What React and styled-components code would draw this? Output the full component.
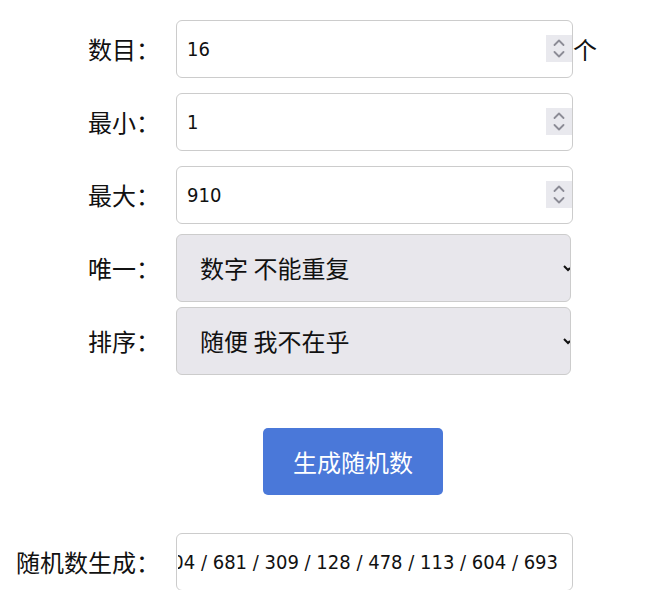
import React, { useEffect, useRef } from "react";
import styled, { createGlobalStyle } from "styled-components";

const GlobalStyle = createGlobalStyle`
  html, body {
    margin: 0;
    padding: 0;
    background: #ffffff;
  }
  body {
    font-family: "Noto Sans CJK SC", "Noto Sans", sans-serif;
    color: #111111;
  }
`;

const Form = styled.div`
  padding-top: 12px;
  display: flex;
  flex-direction: column;
`;

const Row = styled.div`
  display: grid;
  grid-template-columns: 160px 397px auto;
  column-gap: 16px;
  align-items: center;
  height: ${(p) => p.height || 73}px;
`;

const Label = styled.label`
  justify-self: end;
  font-size: 24px;
  line-height: 1;
  white-space: nowrap;
`;

const FieldWrap = styled.div`
  position: relative;
  width: 397px;
  height: 58px;
`;

const Field = styled.input`
  box-sizing: border-box;
  width: 397px;
  height: 58px;
  padding: 0 ${(p) => (p.type === "number" ? 30 : 14)}px 0
    ${(p) => (p.type === "number" ? 10 : 1)}px;
  border: 1px solid #cccccc;
  border-radius: 6px;
  background: #ffffff;
  font-family: "DejaVu Sans Condensed", "DejaVu Sans", sans-serif;
  font-size: 20px;
  color: #111111;
  outline: none;
  -moz-appearance: textfield;

  &::-webkit-inner-spin-button,
  &::-webkit-outer-spin-button {
    -webkit-appearance: none;
    margin: 0;
  }
`;

const SpinBox = styled.div`
  position: absolute;
  right: 1px;
  top: 15px;
  width: 26px;
  height: 27px;
  background: #e9e9ee;
  display: flex;
  flex-direction: column;
  align-items: center;
  justify-content: center;
  gap: 5px;
  pointer-events: none;

  svg {
    display: block;
  }
`;

const PickerWrap = styled.div`
  position: relative;
  width: 395px;
  height: 68px;
`;

const Picker = styled.select`
  box-sizing: border-box;
  width: 395px;
  height: 68px;
  padding: 0 0 0 23px;
  border: 1px solid #cccccc;
  border-radius: 6px;
  background: #e8e7ec;
  font-family: "Noto Sans CJK SC", sans-serif;
  font-size: 24px;
  color: #111111;
  outline: none;
  appearance: none;
  -webkit-appearance: none;
`;

const PickerArrow = styled.svg`
  position: absolute;
  right: 1px;
  top: 31px;
  pointer-events: none;
`;

const Unit = styled.span`
  font-size: 24px;
  margin-left: -16px;
`;

const ButtonRow = styled.div`
  display: flex;
  padding: 51px 0 38px 263px;
`;

const GenerateButton = styled.button`
  width: 180px;
  height: 67px;
  border: none;
  border-radius: 5px;
  background: #4a78d9;
  color: #ffffff;
  font-family: "Noto Sans CJK SC", sans-serif;
  font-size: 24px;
  cursor: pointer;
`;

const Chevron = ({ up }) => (
  <svg width="12" height="7" viewBox="0 0 12 7">
    <path
      d={up ? "M1.5 6 L6 1.5 L10.5 6" : "M1.5 1 L6 5.5 L10.5 1"}
      fill="none"
      stroke="#8c8c96"
      strokeWidth="1.8"
      strokeLinecap="round"
      strokeLinejoin="round"
    />
  </svg>
);

const NumberField = ({ value }) => (
  <FieldWrap>
    <Field type="number" defaultValue={value} />
    <SpinBox>
      <Chevron up />
      <Chevron />
    </SpinBox>
  </FieldWrap>
);

const Select = ({ value, children }) => (
  <PickerWrap>
    <Picker defaultValue={value}>{children}</Picker>
    {/* native arrow, cut off by the right border */}
    <PickerArrow width="7" height="7" viewBox="0 0 7 7">
      <path d="M1 1 L5 5 L7 3" fill="none" stroke="#111111" strokeWidth="2" />
    </PickerArrow>
  </PickerWrap>
);

const numbers = [512, 77, 845, 236, 90, 367, 758, 204, 681, 309, 128, 478, 113, 604, 693];
const result = numbers.join(" / ");

const App = () => {
  const resultRef = useRef(null);

  useEffect(() => {
    if (resultRef.current) {
      resultRef.current.scrollLeft = resultRef.current.scrollWidth;
    }
  }, []);

  return (
    <>
      <GlobalStyle />
      <Form>
        <Row>
          <Label>数目：</Label>
          <NumberField value={16} />
          <Unit>个</Unit>
        </Row>
        <Row>
          <Label>最小：</Label>
          <NumberField value={1} />
        </Row>
        <Row>
          <Label>最大：</Label>
          <NumberField value={910} />
        </Row>
        <Row>
          <Label>唯一：</Label>
          <Select value="unique">
            <option value="unique">数字 不能重复</option>
            <option value="repeat">数字 可以重复</option>
          </Select>
        </Row>
        <Row>
          <Label>排序：</Label>
          <Select value="any">
            <option value="any">随便 我不在乎</option>
            <option value="asc">从小到大</option>
            <option value="desc">从大到小</option>
          </Select>
        </Row>
        <ButtonRow>
          <GenerateButton>生成随机数</GenerateButton>
        </ButtonRow>
        <Row height={57}>
          <Label>随机数生成：</Label>
          <Field ref={resultRef} type="text" readOnly defaultValue={result} />
        </Row>
      </Form>
    </>
  );
};

export default App;
